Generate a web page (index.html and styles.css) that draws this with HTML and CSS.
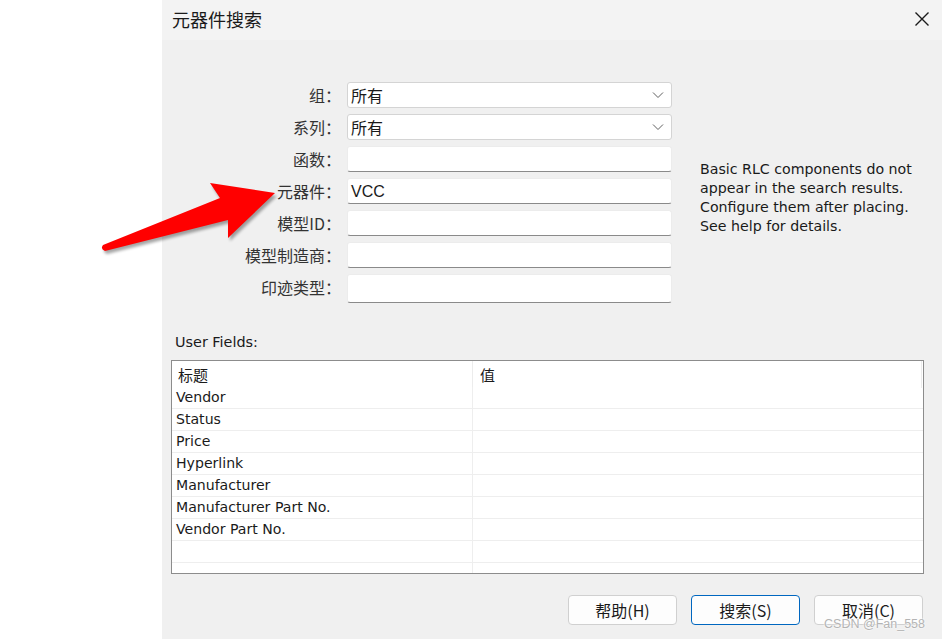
FILE: index.html
```html
<!DOCTYPE html>
<html lang="zh-CN">
<head>
    <meta charset="UTF-8">
    <title>元器件搜索</title>
    <link rel="stylesheet" href="styles.css">
</head>
<body>

<div class="screen">
    <div class="blank"></div>

    <div class="dialog">
        <!-- Title bar -->
        <div class="titlebar">
            <span class="title">元器件搜索</span>
            <svg class="close" width="16" height="16" viewBox="0 0 16 16">
                <path d="M1.5 1.5 L14.5 14.5 M14.5 1.5 L1.5 14.5" stroke="#1a1a1a" stroke-width="1.4" fill="none"/>
            </svg>
        </div>

        <!-- Search criteria -->
        <div class="criteria">
            <div class="form-grid">
                <label>组：</label>
                <div class="combo"><span>所有</span>
                    <svg width="12" height="8" viewBox="0 0 12 8"><path d="M1 1.5 L6 6.5 L11 1.5" stroke="#606060" stroke-width="1" fill="none"/></svg>
                </div>
                <label>系列：</label>
                <div class="combo"><span>所有</span>
                    <svg width="12" height="8" viewBox="0 0 12 8"><path d="M1 1.5 L6 6.5 L11 1.5" stroke="#606060" stroke-width="1" fill="none"/></svg>
                </div>
                <label>函数：</label>
                <div class="field"></div>
                <label>元器件：</label>
                <div class="field latin">VCC</div>
                <label>模型ID：</label>
                <div class="field"></div>
                <label>模型制造商：</label>
                <div class="field"></div>
                <label>印迹类型：</label>
                <div class="field tall"></div>
            </div>

            <p class="note">Basic RLC components do not<br>appear in the search results.<br>Configure them after placing.<br>See help for details.</p>
        </div>

        <!-- User fields -->
        <div class="fields-label">User Fields:</div>
        <div class="list">
            <div class="list-head">
                <div class="cell">标题</div>
                <div class="cell">值</div>
            </div>
            <div class="list-body">
                <div class="row"><div class="cell">Vendor</div><div class="cell"></div></div>
                <div class="row"><div class="cell">Status</div><div class="cell"></div></div>
                <div class="row"><div class="cell">Price</div><div class="cell"></div></div>
                <div class="row"><div class="cell">Hyperlink</div><div class="cell"></div></div>
                <div class="row"><div class="cell">Manufacturer</div><div class="cell"></div></div>
                <div class="row"><div class="cell">Manufacturer Part No.</div><div class="cell"></div></div>
                <div class="row"><div class="cell">Vendor Part No.</div><div class="cell"></div></div>
                <div class="row"><div class="cell"></div><div class="cell"></div></div>
                <div class="row"><div class="cell"></div><div class="cell"></div></div>
            </div>
        </div>

        <!-- Buttons -->
        <div class="buttons">
            <button>帮助(H)</button>
            <button class="default">搜索(S)</button>
            <button>取消(C)</button>
        </div>

        <div class="watermark">CSDN @Fan_558</div>
    </div>
</div>

<!-- Annotation arrow -->
<svg class="arrow" width="942" height="639" viewBox="0 0 942 639">
    <defs>
        <filter id="soft" x="-20%" y="-20%" width="140%" height="140%">
            <feGaussianBlur stdDeviation="1.6"/>
        </filter>
    </defs>
    <path d="M103 245 L220 198 L210 183 L275 193 L228 238 L228 220 L105 251 Q100 249 103 245 Z" fill="#000" opacity="0.35" filter="url(#soft)" transform="translate(2 3)"/>
    <path d="M103 245 L220 198 L210 183 L275 193 L228 238 L228 220 L105 251 Q100 249 103 245 Z" fill="#ff0000"/>
</svg>

</body>
</html>
```

FILE: styles.css
```css
/* Base */
body {
    margin: 0;
    width: 942px;
    height: 639px;
    overflow: hidden;
    background: #fff;
    font-family: "Noto Sans CJK SC", sans-serif;
    color: #1a1a1a;
}

.screen {
    display: flex;
    height: 639px;
}

.blank {
    width: 162px;
    background: #fff;
}

.dialog {
    position: relative;
    flex: 1;
    display: flex;
    flex-direction: column;
    background: #f0f0f0;
}

/* Title bar */
.titlebar {
    height: 40px;
    display: flex;
    align-items: center;
    justify-content: space-between;
    padding: 0 12px 2px 10px;
    background: #f3f3f3;
    box-sizing: border-box;
}

.title {
    font-size: 18px;
    color: #1a1a1a;
}

/* Criteria form */
.criteria {
    display: flex;
    margin-top: 42px;
}

.form-grid {
    display: grid;
    grid-template-columns: 179px 325px;
    grid-auto-rows: 26px;
    column-gap: 6px;
    row-gap: 6px;
}

.form-grid label {
    text-align: right;
    font-size: 16px;
    line-height: 26px;
    color: #333;
}

.combo, .field {
    background: #fff;
    border-radius: 3px;
    box-sizing: border-box;
    font-size: 16px;
    line-height: 24px;
    padding-left: 3px;
}

.combo {
    display: flex;
    align-items: center;
    justify-content: space-between;
    padding-right: 7px;
    border: 1px solid #d4d4d4;
}

.field {
    border: 1px solid #ececec;
    border-bottom: 1px solid #8a8a8a;
}

.field.tall {
    height: 29px;
}

.latin {
    font-family: "Liberation Sans", sans-serif;
    line-height: 25px;
}

.note {
    margin: 78px 0 0 28px;
    font-family: "DejaVu Sans", sans-serif;
    font-size: 14.2px;
    line-height: 19px;
    color: #1a1a1a;
}

/* User fields list */
.fields-label {
    margin: 32px 0 0 13px;
    font-family: "DejaVu Sans", sans-serif;
    font-size: 14.4px;
    line-height: 20px;
}

.list {
    margin: 8px 18px 0 9px;
    height: 214px;
    border: 1px solid #8c8c8c;
    background: #fff;
    box-sizing: border-box;
    overflow: hidden;
}

.list-head, .row {
    display: grid;
    grid-template-columns: 301px 1fr;
}

.list-head {
    height: 26px;
    font-size: 15px;
    line-height: 27px;
}

.list-head .cell:first-child {
    padding-left: 6px;
    border-right: 1px solid #ececec;
}

.list-head .cell:last-child {
    padding-left: 7px;
    margin-right: 1px;
    border-right: 1px solid #ececec;
}

.row {
    height: 22px;
    border-bottom: 1px solid #eeeeee;
    box-sizing: border-box;
    font-family: "DejaVu Sans", sans-serif;
    font-size: 14.1px;
    line-height: 21px;
}

.row .cell:first-child {
    padding-left: 4px;
    border-right: 1px solid #eeeeee;
}

/* Buttons */
.buttons {
    display: flex;
    justify-content: flex-end;
    gap: 14px;
    margin: 21px 19px 0 0;
}

button {
    width: 109px;
    height: 30px;
    border: 1px solid #d0d0d0;
    border-radius: 4px;
    background: #fdfdfd;
    font-family: "Noto Sans CJK SC", sans-serif;
    font-size: 16px;
    color: #1a1a1a;
    padding: 0;
}

button.default {
    border-color: #0067c0;
}

.watermark {
    position: absolute;
    right: 17px;
    bottom: 8px;
    font-family: "Liberation Sans", sans-serif;
    font-size: 12.5px;
    color: #b4b4b4;
    text-shadow: 0 0 2px #fff, 0 0 2px #fff;
}

/* Annotation arrow */
.arrow {
    position: absolute;
    top: 0;
    left: 0;
    pointer-events: none;
}
```
